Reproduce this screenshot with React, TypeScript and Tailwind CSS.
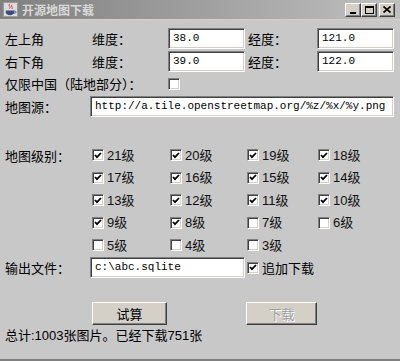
import React from 'react';

const cjk = { fontFamily: '"Noto Sans CJK SC", sans-serif' };
const mixed = { fontFamily: '"Liberation Sans", "Noto Sans CJK SC", sans-serif' };
const mono = { fontFamily: '"Liberation Mono", "Noto Sans CJK SC", monospace' };

const CheckBox: React.FC<{ checked?: boolean }> = ({ checked }) => (
  <div className="w-[12px] h-[12px] shrink-0 bg-white border border-t-[#808080] border-l-[#808080] border-b-white border-r-white shadow-[inset_1px_1px_0_#404040,inset_-1px_-1px_0_#d4d0c8] flex items-center justify-center">
    {checked && (
      <svg width="8" height="7" viewBox="0 0 8 7">
        <path d="M1 3 L3 5.2 L7 1" fill="none" stroke="#000" strokeWidth="1.8" />
      </svg>
    )}
  </div>
);

const Field: React.FC<{ value: string; className: string }> = ({ value, className }) => (
  <div
    className={`h-[21px] bg-white border border-t-[#808080] border-l-[#808080] border-b-white border-r-white shadow-[inset_1px_1px_0_#404040,inset_-1px_-1px_0_#d4d0c8] flex items-center pl-[4px] text-[11px] text-black overflow-hidden whitespace-nowrap ${className}`}
    style={mono}
  >
    {value}
  </div>
);

const Level: React.FC<{ n: number; checked: boolean }> = ({ n, checked }) => (
  <div className="flex items-center gap-[3px]">
    <CheckBox checked={checked} />
    <span className="text-[13px] text-[#111]" style={mixed}>{n}级</span>
  </div>
);

const levelRows: number[][] = [
  [21, 20, 19, 18],
  [17, 16, 15, 14],
  [13, 12, 11, 10],
  [9, 8, 7, 6],
  [5, 4, 3],
];

export default function App() {
  return (
    <div className="w-[400px] h-[361px] bg-[#c8c8c8] flex flex-col overflow-hidden border-b-2 border-b-[#808080] text-black" style={cjk}>
      {/* Title bar */}
      <div className="h-[20px] shrink-0 bg-gradient-to-r from-[#808080] to-[#c0c0c0] flex items-center pl-[3px] pr-[5px] border-b border-b-[#d4d0c8]">
        <svg width="15" height="15" viewBox="0 0 16 16" className="shrink-0">
          <rect x="0.5" y="0.5" width="15" height="15" fill="#dcdcdc" stroke="#9a9a9a" />
          <path d="M7 2 C5 4 9 5 7 7 M9.5 3 C8 5 11 5.5 9.5 7.5" fill="none" stroke="#c04040" strokeWidth="1" />
          <path d="M3 9 H12 V11 C12 13 10 14 7.5 14 C5 14 3 13 3 11 Z" fill="#3a4a80" />
          <path d="M12 9.5 C14.5 9.5 14.5 12 12 12" fill="none" stroke="#3a4a80" strokeWidth="1" />
        </svg>
        <span className="ml-[4px] text-[12px] font-bold text-[#d8d8d8] leading-none">开源地图下载</span>
        <div className="ml-auto flex items-center">
          {['min', 'max'].map((k) => (
            <div key={k} className="w-[16px] h-[14px] bg-[#d4d0c8] border border-t-white border-l-white border-b-[#404040] border-r-[#404040] shadow-[inset_-1px_-1px_0_#808080] flex items-center justify-center">
              {k === 'min' ? (
                <div className="w-[6px] h-[2px] bg-black mt-[6px]" />
              ) : (
                <div className="w-[9px] h-[8px] border border-black border-t-2" />
              )}
            </div>
          ))}
          <div className="ml-[2px] w-[16px] h-[14px] bg-[#d4d0c8] border border-t-white border-l-white border-b-[#404040] border-r-[#404040] shadow-[inset_-1px_-1px_0_#808080] flex items-center justify-center">
            <svg width="8" height="7" viewBox="0 0 8 7">
              <path d="M0.5 0.5 L7.5 6.5 M7.5 0.5 L0.5 6.5" stroke="#000" strokeWidth="1.6" />
            </svg>
          </div>
        </div>
      </div>

      {/* Body */}
      <div className="flex flex-col pl-[5px] text-[13px]">
        <div className="mt-[8px] h-[21px] flex items-center">
          <span className="w-[87px]">左上角</span>
          <span className="w-[76px]">维度：</span>
          <Field value="38.0" className="w-[77px]" />
          <span className="ml-[3px] w-[69px]">经度：</span>
          <Field value="121.0" className="w-[77px]" />
        </div>
        <div className="mt-[2px] h-[21px] flex items-center">
          <span className="w-[87px]">右下角</span>
          <span className="w-[76px]">维度：</span>
          <Field value="39.0" className="w-[77px]" />
          <span className="ml-[3px] w-[69px]">经度：</span>
          <Field value="122.0" className="w-[77px]" />
        </div>
        <div className="mt-[2px] h-[20px] flex items-center">
          <span className="w-[163px]">仅限中国（陆地部分）：</span>
          <CheckBox />
        </div>
        <div className="mt-[2px] h-[21px] flex items-center">
          <span className="w-[85px]">地图源：</span>
          <Field value="http://a.tile.openstreetmap.org/%z/%x/%y.png" className="w-[304px]" />
        </div>

        <div className="mt-[27px] grid grid-cols-[87px_78px_77px_71px_1fr] auto-rows-[22.5px] items-center">
          {levelRows.map((row, i) => (
            <React.Fragment key={i}>
              <span>{i === 0 ? '地图级别：' : ''}</span>
              {row.map((n) => (
                <Level key={n} n={n} checked={n >= 8} />
              ))}
              {row.length < 4 && <span />}
            </React.Fragment>
          ))}
        </div>

        <div className="h-[22px] flex items-center">
          <span className="w-[85px]">输出文件：</span>
          <Field value="c:\abc.sqlite" className="w-[155px]" />
          <div className="ml-[2px] flex items-center gap-[3px]">
            <CheckBox checked />
            <span>追加下载</span>
          </div>
        </div>

        <div className="mt-[23px] h-[23px] flex items-center">
          <button className="ml-[87px] w-[75px] h-[23px] bg-[#d4d0c8] border border-t-white border-l-white border-b-[#404040] border-r-[#404040] shadow-[inset_-1px_-1px_0_#808080] text-[13px] text-black leading-none">
            试算
          </button>
          <button className="ml-[79px] w-[71px] h-[23px] bg-[#d4d0c8] border border-t-white border-l-white border-b-[#404040] border-r-[#404040] shadow-[inset_-1px_-1px_0_#808080] text-[13px] text-[#a0a0a0] leading-none [text-shadow:1px_1px_0_#ffffff]">
            下载
          </button>
        </div>

        <div className="h-[22px] flex items-center" style={mixed}>
          总计:1003张图片。已经下载751张
        </div>
      </div>
    </div>
  );
}
